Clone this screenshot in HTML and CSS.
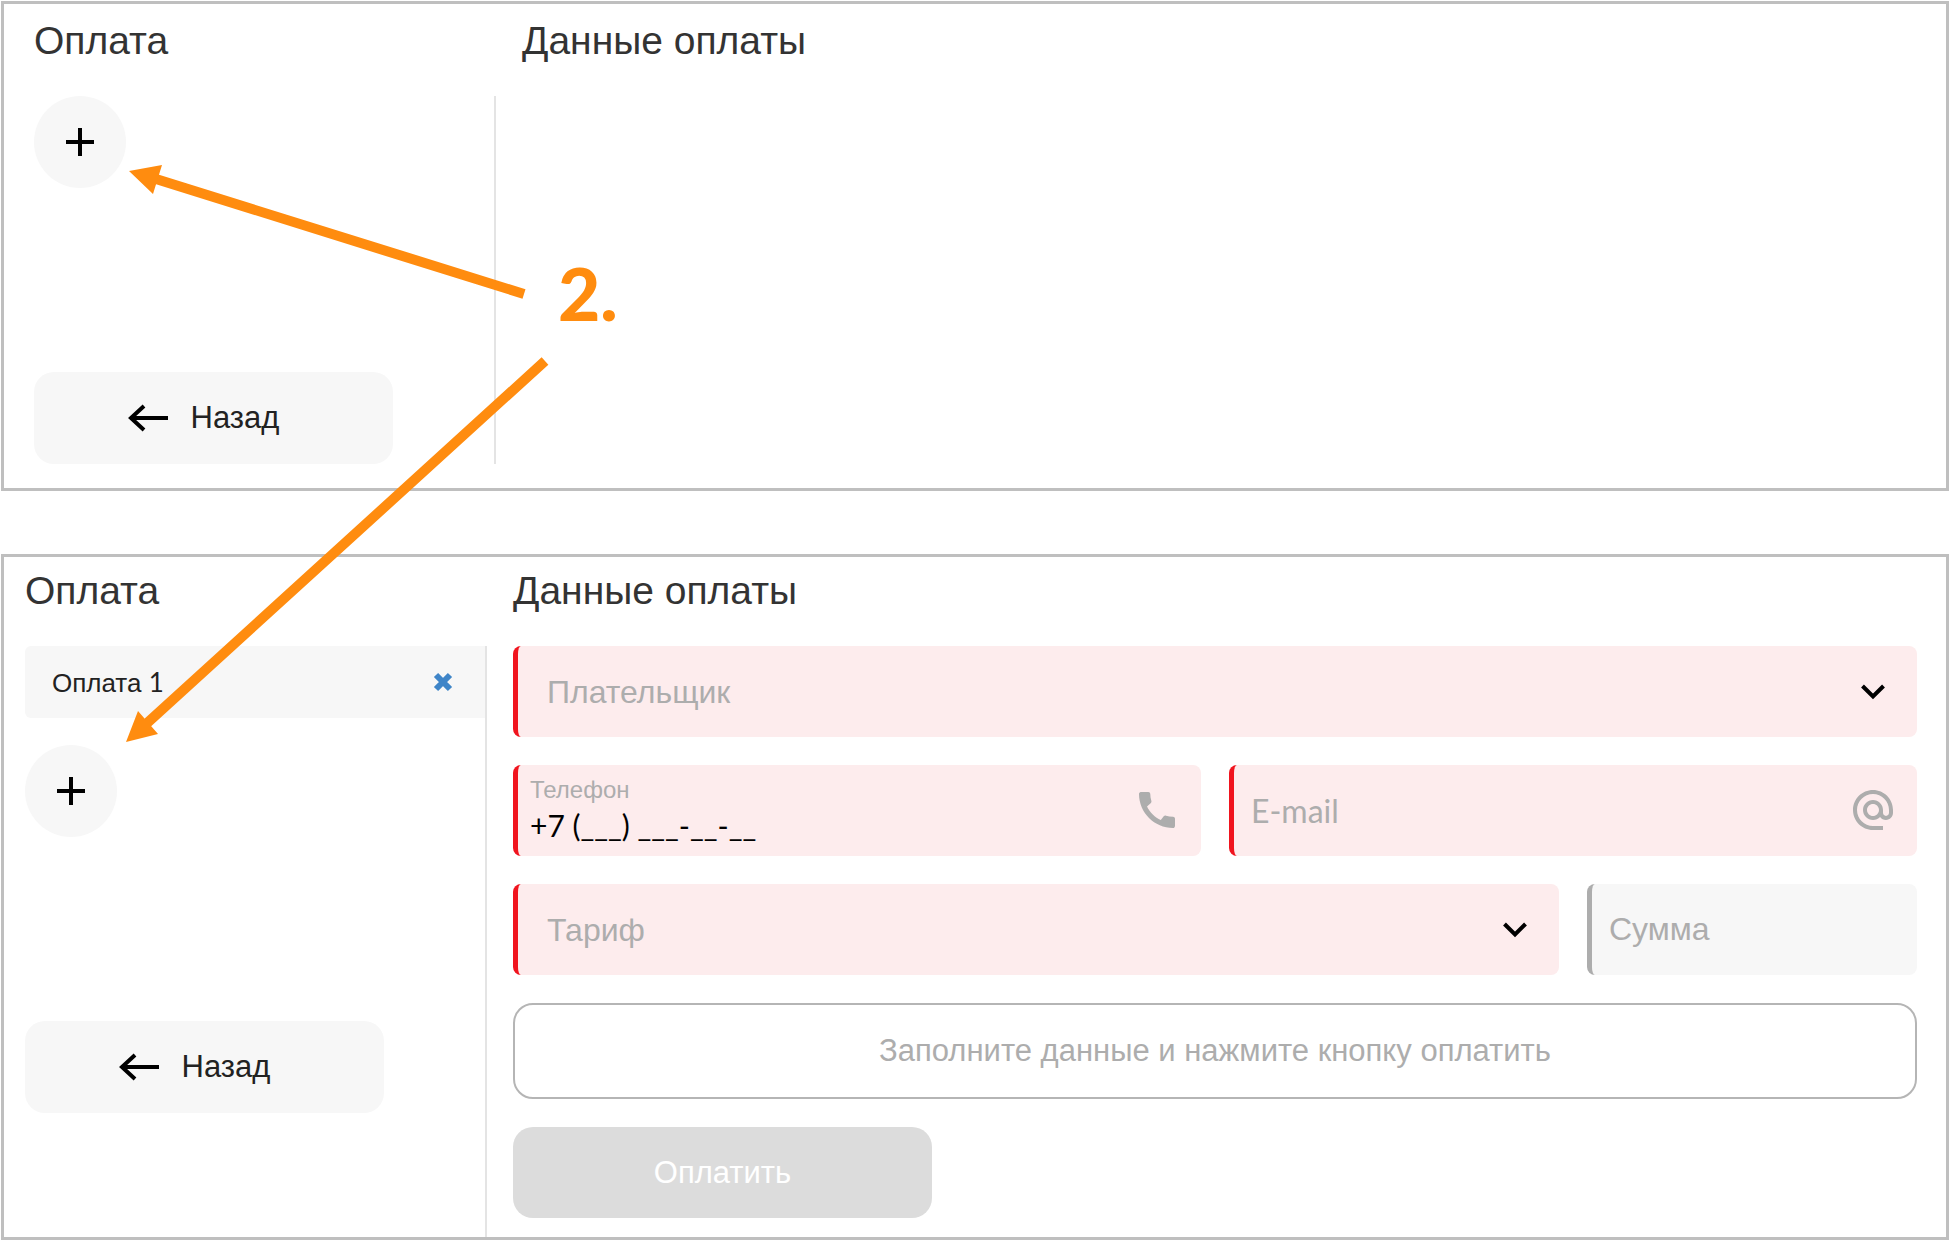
FILE: index.html
```html
<!DOCTYPE html>
<html lang="ru">
<head>
  <meta charset="UTF-8" />
  <meta name="viewport" content="width=device-width, initial-scale=1.0"/>
  <title>Оплата</title>
  <link rel="stylesheet" href="styles.css">
</head>
<body>
  <main class="guide">

    <!-- No payments yet -->
    <section class="panel panel-empty">
      <div class="side">
        <h2>Оплата</h2>
        <div class="side-body">
          <button type="button" class="add" aria-label="Добавить">
            <svg width="30" height="30" viewBox="0 0 30 30"><path d="M15 1v28M1 15h28" /></svg>
          </button>
          <button type="button" class="back">
            <svg width="40" height="28" viewBox="0 0 40 28"><path d="M40 14H3M16 2L3 14l13 12" /></svg>
            Назад
          </button>
        </div>
      </div>
      <div class="details">
        <h2>Данные оплаты</h2>
      </div>
    </section>

    <!-- One payment added -->
    <section class="panel panel-form">
      <div class="side">
        <h2>Оплата</h2>
        <div class="side-body">
          <div class="item">
            <span>Оплата <span class="num">1</span></span>
            <button type="button" class="remove" aria-label="Удалить">
              <svg width="20" height="20" viewBox="0 0 20 20"><path d="M3 3l14 14M17 3L3 17" /></svg>
            </button>
          </div>
          <button type="button" class="add" aria-label="Добавить">
            <svg width="30" height="30" viewBox="0 0 30 30"><path d="M15 1v28M1 15h28" /></svg>
          </button>
          <button type="button" class="back">
            <svg width="40" height="28" viewBox="0 0 40 28"><path d="M40 14H3M16 2L3 14l13 12" /></svg>
            Назад
          </button>
        </div>
      </div>

      <div class="details">
        <h2>Данные оплаты</h2>
        <form class="form">
          <div class="field required">
            <select id="payer" aria-label="Плательщик">
              <option>Плательщик</option>
            </select>
            <svg class="icon chevron" viewBox="0 0 48 48"><path d="M13.500 19L24 29.500 34.500 19" /></svg>
          </div>

          <div class="row">
            <div class="field required with-label">
              <label for="phone">Телефон</label>
              <input type="tel" id="phone" value="+7 (___) ___-__-__" />
              <svg class="icon" viewBox="0 0 24 24"><path d="M20.010 15.380c-1.230 0-2.420-.2-3.530-.56-.35-.12-.74-.03-1.010.24l-1.570 1.970c-2.830-1.350-5.480-3.900-6.890-6.830l1.950-1.660c.27-.28.35-.67.24-1.020-.37-1.110-.56-2.300-.56-3.530 0-.54-.45-.99-.99-.99H4.190C3.650 3 3 3.240 3 3.990 3 13.280 10.730 21 20.010 21c.71 0 .99-.63.99-1.180v-3.450c0-.54-.45-.99-.99-.99z" /></svg>
            </div>
            <div class="field required">
              <input type="email" id="email" class="latin" placeholder="E-mail" aria-label="E-mail" />
              <svg class="icon" viewBox="0 0 24 24"><path d="M12 2C6.480 2 2 6.480 2 12s4.480 10 10 10h5v-2h-5c-4.340 0-8-3.660-8-8s3.660-8 8-8 8 3.660 8 8v1.430c0 .79-.71 1.570-1.500 1.570s-1.500-.78-1.500-1.570V12c0-2.760-2.240-5-5-5s-5 2.240-5 5 2.240 5 5 5c1.380 0 2.640-.56 3.540-1.470.65.89 1.770 1.470 2.960 1.470 1.970 0 3.500-1.600 3.500-3.570V12c0-5.520-4.480-10-10-10zm0 13c-1.660 0-3-1.340-3-3s1.340-3 3-3 3 1.340 3 3-1.340 3-3 3z" /></svg>
            </div>
          </div>

          <div class="row">
            <div class="field required">
              <select id="tariff" aria-label="Тариф">
                <option>Тариф</option>
              </select>
              <svg class="icon chevron" viewBox="0 0 48 48"><path d="M13.500 19L24 29.500 34.500 19" /></svg>
            </div>
            <div class="field sum">
              <input type="text" id="sum" placeholder="Сумма" aria-label="Сумма" readonly />
            </div>
          </div>

          <div class="message">Заполните данные и нажмите кнопку оплатить</div>
          <button type="submit" class="pay" disabled>Оплатить</button>
        </form>
      </div>
    </section>

    <!-- Step number and arrows to both plus buttons -->
    <svg class="callout" width="650" height="760" viewBox="0 0 650 760">
      <path class="line" d="M524 294L156 179M545 361L145 725" />
      <path d="M129 171L162 165 153 194zM126 742L138 711 158 734z" />
      <text x="558" y="321">2.</text>
    </svg>
  </main>
</body>
</html>
```

FILE: styles.css
```css
* {
  box-sizing: border-box;
}

body {
  margin: 0;
  background: #fff;
  color: #222;
  font-family: "Liberation Sans", Arial, sans-serif;
  font-size: 31px;
}

button,
input,
select {
  font: inherit;
  color: inherit;
  border: none;
  border-radius: 0;
  background: none;
  margin: 0;
  padding: 0;
  outline: none;
}

button {
  cursor: pointer;
}

h2 {
  margin: 0 0 32px;
  font-size: 39px;
  line-height: 46px;
  font-weight: normal;
  color: #333;
}

.guide {
  position: relative;
  display: flex;
  flex-direction: column;
  gap: 63px;
  padding: 1px;
}

.panel {
  display: flex;
  gap: 26px;
  border: 3px solid #bfbfbf;
}

.panel-empty {
  padding: 14px 30px 24px;
}

.panel-form {
  padding: 11px 29px 0 21px;
}

.side {
  display: flex;
  flex-direction: column;
  flex: 0 0 462px;
}

.side-body {
  display: flex;
  flex-direction: column;
  align-items: flex-start;
  flex: 1;
  border-right: 2px solid #e4e4e4;
}

.details {
  flex: 1;
  min-width: 0;
}

.panel-form .details {
  padding-bottom: 19px;
}

/* Sidebar */
.item {
  display: flex;
  align-items: center;
  justify-content: space-between;
  align-self: stretch;
  height: 72px;
  margin-bottom: 27px;
  padding: 0 32px 0 27px;
  border-radius: 6px 0 0 6px;
  background: #f7f7f7;
  font-size: 26px;
}

.num,
.latin {
  font-family: Lato, sans-serif;
}

.remove {
  display: flex;
}

.remove svg {
  stroke: #3f85c8;
  stroke-width: 6;
}

.add {
  display: flex;
  align-items: center;
  justify-content: center;
  width: 92px;
  height: 92px;
  border-radius: 50%;
  background: #f7f7f7;
}

.add svg,
.back svg {
  fill: none;
  stroke: #000;
  stroke-width: 4;
}

.back {
  display: flex;
  align-items: center;
  justify-content: center;
  gap: 23px;
  width: 359px;
  height: 92px;
  margin-top: 184px;
  padding-right: 20px;
  border-radius: 20px;
  background: #f7f7f7;
}

/* Form */
.form {
  display: flex;
  flex-direction: column;
  gap: 28px;
}

.row {
  display: flex;
  gap: 28px;
}

.field {
  position: relative;
  display: flex;
  flex-direction: column;
  flex: 1;
  height: 91px;
  min-height: 91px;
  border-left: 5px solid #adadad;
  border-radius: 8px;
  background: #f7f7f7;
}

.field.required {
  border-left-color: #f0141e;
  background: #fdeced;
}

.field.sum {
  flex: 0 0 330px;
}

.field input,
.field select {
  flex: 1;
  width: 100%;
  min-height: 0;
  padding: 0 76px 0 17px;
  font-size: 32px;
}

.field select {
  appearance: none;
  padding-left: 29px;
  color: #adadad;
}

.field input::placeholder {
  color: #adadad;
  opacity: 1;
}

.with-label {
  padding: 11px 0 10px;
}

.with-label label {
  padding-left: 12px;
  font-size: 24px;
  line-height: 28px;
  color: #adadad;
}

.field.with-label input {
  padding-left: 12px;
  font-family: Lato, sans-serif;
  font-size: 30px;
  color: #000;
}

.icon {
  position: absolute;
  top: 21px;
  right: 20px;
  width: 48px;
  height: 48px;
  fill: #adadad;
  pointer-events: none;
}

.icon.chevron {
  fill: none;
  stroke: #000;
  stroke-width: 4;
}

.message {
  display: flex;
  align-items: center;
  justify-content: center;
  height: 96px;
  border: 2px solid #b5b5b5;
  border-radius: 20px;
  color: #adadad;
}

.pay {
  width: 419px;
  height: 91px;
  border-radius: 20px;
  background: #dcdcdc;
  color: #fff;
}

/* Callout over both panels */
.callout {
  position: absolute;
  top: 0;
  left: 0;
  fill: #ff8c0f;
  pointer-events: none;
}

.callout .line {
  stroke: #ff8c0f;
  stroke-width: 10;
}

.callout text {
  font-family: Lato, sans-serif;
  font-size: 73px;
  font-weight: 900;
}
```
